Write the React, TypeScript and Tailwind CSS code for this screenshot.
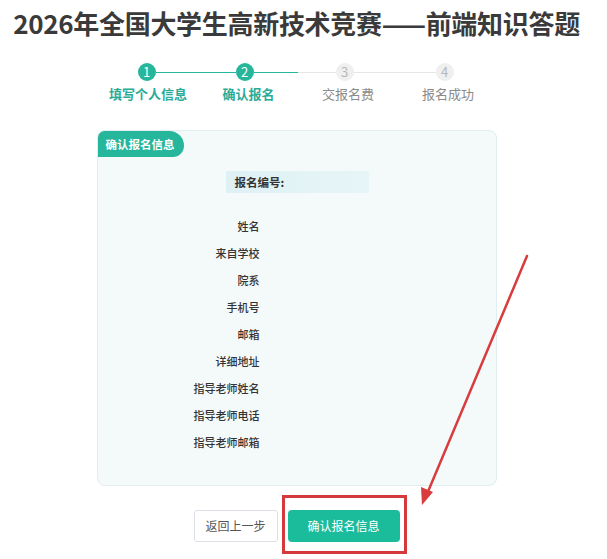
import React from "react";

const labels = ["姓名", "来自学校", "院系", "手机号", "邮箱", "详细地址", "指导老师姓名", "指导老师电话", "指导老师邮箱"];

export default function App() {
  return (
    <div
      className="relative w-[607px] h-[559px] overflow-hidden bg-white"
      style={{ fontFamily: '"Noto Sans CJK SC", "Noto Sans", sans-serif' }}
    >
      <div className="flex flex-col items-center pr-[14px]">
        <h1 className="mt-[7px] text-[26px] leading-[32px] font-bold text-[#3a3a3a] tracking-[-0.3px]">
          2026年全国大学生高新技术竞赛——前端知识答题
        </h1>

        {/* steps */}
        <div className="mt-[24px] flex items-center w-[400px] pl-[41px]">
          <div className="w-[18px] h-[18px] rounded-full bg-[#26b69b] text-white text-[13px] leading-[18px] text-center">1</div>
          <div className="w-[80px] h-px bg-[#26b69b]" />
          <div className="w-[18px] h-[18px] rounded-full bg-[#26b69b] text-white text-[13px] leading-[18px] text-center">2</div>
          <div className="w-[44px] h-px bg-[#26b69b]" />
          <div className="w-[38px] h-px bg-[#e6e6e6]" />
          <div className="w-[18px] h-[18px] rounded-full bg-[#efefef] text-[#b8b8b8] text-[13px] leading-[18px] text-center">3</div>
          <div className="w-[82px] h-px bg-[#e6e6e6]" />
          <div className="w-[18px] h-[18px] rounded-full bg-[#efefef] text-[#b8b8b8] text-[13px] leading-[18px] text-center">4</div>
        </div>
        <div className="mt-[4px] flex w-[400px] text-[13px] leading-[18px]">
          <div className="w-[100px] text-center font-bold text-[#2aab97] pl-[3px]">填写个人信息</div>
          <div className="w-[100px] text-center font-bold text-[#2aab97] pl-[4px]">确认报名</div>
          <div className="w-[100px] text-center text-[#8a8a8a] pl-[3px]">交报名费</div>
          <div className="w-[100px] text-center text-[#8a8a8a] pl-[3px]">报名成功</div>
        </div>

        {/* card */}
        <div className="mt-[27px] w-[400px] h-[356px] rounded-[8px] border border-[#e1edef] bg-[#f4f9fa]">
          <div className="w-[86px] h-[26px] bg-[#26b69b] rounded-tl-[7px] rounded-tr-[16px] rounded-br-[12px] text-white text-[11.5px] font-bold leading-[26px] pl-[8px]">
            确认报名信息
          </div>
          <div className="mt-[14px] ml-[128px] w-[143px] h-[22px] bg-gradient-to-r from-[#dff1f5] to-[#e6f5f7] text-[11.5px] font-bold text-[#333] leading-[22px] pl-[9px]">
            报名编号:
          </div>
          <div className="mt-[20px] flex flex-col">
            {labels.map((l) => (
              <div key={l} className="h-[27px] flex items-center">
                <div className="w-[162px] text-right text-[11px] font-medium text-[#333]">{l}</div>
              </div>
            ))}
          </div>
        </div>

        {/* buttons */}
        <div className="mt-[24px] flex gap-[10px]">
          <button className="w-[84px] h-[32px] rounded-[3px] border border-[#dcdfe6] bg-white text-[12px] text-[#555]">返回上一步</button>
          <div className="relative">
            <button className="w-[112px] h-[32px] rounded-[4px] bg-[#1bbc9c] text-[12px] text-white">确认报名信息</button>
            <div className="absolute left-[-6px] top-[-15px] w-[125px] h-[59px] border-[3px] border-[#d5393b]" />
          </div>
        </div>
      </div>

      {/* arrow */}
      <svg className="absolute left-0 top-0 pointer-events-none" width="607" height="559">
        <line x1="527" y1="256" x2="427" y2="494" stroke="#d83c3c" strokeWidth="2.5" strokeLinecap="round" />
        <polygon points="422,505 421,487 433,492" fill="#d83c3c" />
      </svg>
    </div>
  );
}
